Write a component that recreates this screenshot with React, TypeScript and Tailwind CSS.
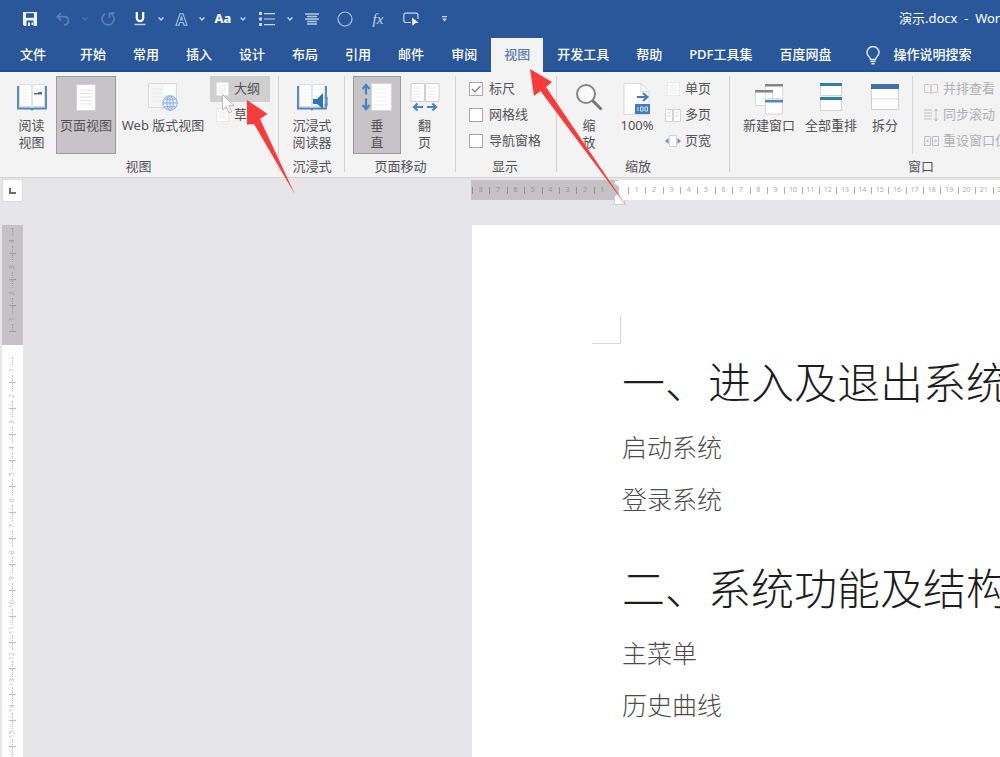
import { useState } from 'react';
import type { ReactNode } from 'react';
import clsx from 'clsx';

const tabs = ['开始', '常用', '插入', '设计', '布局', '引用', '邮件', '审阅', '视图', '开发工具', '帮助', 'PDF工具集', '百度网盘'];

const chapters = [
  { title: '一、进入及退出系统', items: ['启动系统', '登录系统'] },
  { title: '二、系统功能及结构', items: ['主菜单', '历史曲线'] }
];

const marginUnits = [8, 7, 6, 5, 4, 3, 2, 1];
const pageUnits = Array.from({ length: 22 }, (_, index) => index + 1);
const marginLines = [4, 3, 2, 1];
const pageLines = Array.from({ length: 16 }, (_, index) => index + 1);

function Caret({ className, label }: { className: string; label: string }) {
  return (
    <button type="button" aria-label={label} className={clsx('flex h-7 items-center justify-center', className)}>
      <svg width="6" height="4" viewBox="0 0 6 4" fill="none" stroke="currentColor" strokeWidth="1.4">
        <path d="M.6.6 3 3 5.4.6" />
      </svg>
    </button>
  );
}

function QuickButton({ className, label, children }: { className: string; label: string; children: ReactNode }) {
  return (
    <button type="button" aria-label={label} className={clsx('flex h-7 items-center justify-center', className)}>
      {children}
    </button>
  );
}

function QuickAccess() {
  return (
    <div className="flex items-center pl-[13px] text-[#c9d8ee]">
      <QuickButton className="w-[34px]" label="保存">
        <svg width="14" height="14" viewBox="0 0 14 14">
          <path d="M0 0h14v14H1.500L0 12.500z" fill="#eef4fc" />
          <path d="M3 1.200h8v4.600H3zM3.500 8.500h7V14h-7z" fill="#2a579a" />
          <path d="M5 10.500h2V14H5zM8.500 10.500h1.500V13H8.500z" fill="#eef4fc" />
        </svg>
      </QuickButton>
      <QuickButton className="w-[32px] text-[#5b80b9]" label="撤消">
        <svg width="14" height="14" viewBox="0 0 14 14" fill="none" stroke="currentColor" strokeWidth="1.700">
          <path d="M5 1 1.200 4.700 5 8.400M1.500 4.700H8c3 0 4.500 1.800 4.500 4S11 12.700 8 13" />
        </svg>
      </QuickButton>
      <Caret className="w-[11px] text-[#4871ae]" label="撤消列表" />
      <QuickButton className="w-[36px] text-[#5b80b9]" label="重复">
        <svg width="14" height="14" viewBox="0 0 14 14" fill="none" stroke="currentColor" strokeWidth="1.700">
          <path d="M4 1.800A6 6 0 1 0 10.500 2M8.500 6V1.200h5" />
        </svg>
      </QuickButton>
      <QuickButton className="w-[28px] text-white" label="下划线">
        <svg width="12" height="14" viewBox="0 0 12 14" fill="none" stroke="currentColor">
          <path d="M2.800 0v6a3.200 3.200 0 0 0 6.400 0V0" strokeWidth="2.200" />
          <path d="M.5 12.500h11" strokeWidth="1.500" opacity=".7" />
        </svg>
      </QuickButton>
      <Caret className="w-[14px]" label="下划线样式" />
      <QuickButton className="w-[26px] text-[#a9c0e2]" label="文本效果">
        <svg width="13" height="13" viewBox="0 0 13 13" fill="none" stroke="currentColor" strokeWidth="1.100">
          <path d="M5 .8h3l4 11.400H9L8.200 9.500H4.800L4 12.200H1zM5.600 7h1.800l-.9-3z" />
        </svg>
      </QuickButton>
      <Caret className="w-[16px]" label="文本效果选项" />
      <QuickButton className="w-[26px] text-[13px] font-bold text-white" label="更改大小写">
        Aa
      </QuickButton>
      <Caret className="w-[14px]" label="大小写选项" />
      <QuickButton className="w-[34px]" label="项目符号">
        <svg width="16" height="14" viewBox="0 0 16 14" fill="currentColor">
          <path d="M0 0h3v3H0zM0 5.500h3v3H0zM0 11h3v3H0zM5 1h11v1.200H5zM5 6.400h11v1.200H5zM5 12h11v1.200H5z" />
        </svg>
      </QuickButton>
      <Caret className="w-[12px]" label="项目符号库" />
      <QuickButton className="w-[32px] text-[#b5c9e6]" label="居中">
        <svg width="14" height="12" viewBox="0 0 14 12" fill="none" stroke="currentColor" strokeWidth="1.500">
          <path d="M0 1h14M2 3.500h10M0 6h14M2 8.500h10M2 11h10" />
        </svg>
      </QuickButton>
      <QuickButton className="w-[34px] text-[#a9c0e2]" label="椭圆">
        <svg width="16" height="16" viewBox="0 0 16 16" fill="none" stroke="currentColor" strokeWidth="1.200">
          <circle cx="8" cy="8" r="7" />
        </svg>
      </QuickButton>
      <QuickButton className="w-[32px] font-['Liberation_Serif',serif] text-[15px] italic" label="公式">
        fx
      </QuickButton>
      <QuickButton className="w-[34px]" label="选择对象">
        <svg width="16" height="15" viewBox="0 0 16 15">
          <path d="M8 10.500H2.500A1.800 1.800 0 0 1 .8 8.700V3A1.800 1.800 0 0 1 2.500 1.200h10.700A1.800 1.800 0 0 1 15 3v4" fill="none" stroke="currentColor" strokeWidth="1.200" />
          <path d="m9 5.500 6.500 5.200-3.500.5L9.500 14z" fill="#fff" />
        </svg>
      </QuickButton>
      <QuickButton className="w-[32px]" label="自定义快速访问工具栏">
        <svg width="5" height="6" viewBox="0 0 5 6" fill="currentColor">
          <path d="M0 0h5v1.200H0zM0 2.500h5L2.500 5.500z" />
        </svg>
      </QuickButton>
    </div>
  );
}

function Group({ title, className, children }: { title: string; className?: string; children: ReactNode }) {
  return (
    <section
      aria-label={title}
      className={clsx('relative flex shrink-0 flex-col pt-1 after:absolute after:top-1 after:right-0 after:h-[96px] after:w-px after:bg-[#d2d2d3]', className)}
    >
      <div className="flex h-[78px] items-start">{children}</div>
      <h2 className="mt-[3px] text-center leading-[18px]">{title}</h2>
    </section>
  );
}

function BigButton({ icon, lines, className, pressed }: { icon: ReactNode; lines: string[]; className: string; pressed?: boolean }) {
  return (
    <button
      type="button"
      aria-pressed={pressed}
      className={clsx(
        'flex h-[78px] shrink-0 flex-col items-center border pt-1.5 leading-[17px] whitespace-nowrap',
        pressed ? 'border-[#9d9b9e] bg-[#c6c4c6]' : 'border-transparent',
        className
      )}
    >
      <span className="mb-1.5 flex h-7 items-center justify-center">{icon}</span>
      {lines.map((line) => (
        <span key={line}>{line}</span>
      ))}
    </button>
  );
}

function SmallButton({ icon, label, className }: { icon: ReactNode; label: string; className?: string }) {
  return (
    <button type="button" className={clsx('flex h-[26px] items-center gap-1 whitespace-nowrap', className)}>
      <span className="flex w-4 shrink-0 justify-center">{icon}</span>
      {label}
    </button>
  );
}

function CheckRow({ label, defaultChecked }: { label: string; defaultChecked?: boolean }) {
  return (
    <label className="relative flex h-[26px] items-center gap-1.5 whitespace-nowrap">
      <input type="checkbox" defaultChecked={defaultChecked} className="peer size-3.5 appearance-none border border-[#aaa8aa] bg-white" />
      <svg className="absolute left-0 hidden size-3.5 peer-checked:block" viewBox="0 0 14 14" fill="none" stroke="#777" strokeWidth="1.200">
        <path d="m3 7 3 3 5.500-6" />
      </svg>
      {label}
    </label>
  );
}

function BookIcon({ sound }: { sound?: boolean }) {
  return (
    <svg width="32" height="28" viewBox="0 0 32 28">
      <path d="M2 3v22.500h13l1 1 1-1h13V3" fill="none" stroke="#4a83bf" strokeWidth="1.800" />
      <path d="M3.500 1.500H13l3 1 3-1h9.500v22H18l-2 1-2-1H3.500z" fill="#fff" stroke="#cbd5e2" strokeWidth=".8" />
      <path d="M16 3v21.500" stroke="#bccbdd" />
      <path d="M6 7h7M6 10h7M6 13h7M6 16h7M6 19h7M19 7h7M19 13h7M19 16h7" stroke="#ececef" strokeWidth=".8" />
      {sound ? (
        <>
          <path d="M17 16h4l6-6v16l-6-5h-4z" fill="#2f74b5" />
          <path d="M28.500 14c1.800 2.500 1.800 6 0 8.500M30 12c2.500 4 2.500 9 0 13" fill="none" stroke="#6d9bd0" />
        </>
      ) : (
        <path d="M18 10h4V9h4v2.500h-8z" fill="#4a6f9e" />
      )}
    </svg>
  );
}

function PageIcon({ small }: { small?: boolean }) {
  return (
    <svg width={small ? 13 : 20} height={small ? 14 : 27} viewBox="0 0 20 27" preserveAspectRatio="none">
      <path d="M.5.500h19v26H.5z" fill="#fff" stroke="#d3d2d5" />
      <path d="M4 6h12M4 9.500h12M4 13h12M4 16.500h12M4 20h12" stroke="#e3e2e5" />
    </svg>
  );
}

function WebIcon() {
  return (
    <svg width="30" height="28" viewBox="0 0 30 28">
      <path d="M.5.500h28v24H.5z" fill="#f6f6f7" stroke="#dadade" />
      <path d="M16 2.500h11v9H16z" fill="#fff" />
      <path d="M4 6h10M4 10h10M4 14h10M4 18h9M16 14h10" stroke="#e6e6e9" />
      <g fill="#e8f0fa" stroke="#8aabdb">
        <circle cx="22" cy="20" r="7.200" />
        <ellipse cx="22" cy="20" rx="3.200" ry="7.200" />
        <path d="M22 13v14M15 20h14M16.500 16.200h11M16.500 23.800h11" />
      </g>
    </svg>
  );
}

function VerticalIcon() {
  return (
    <svg width="30" height="28" viewBox="0 0 30 28">
      <path d="M9.500.5h20v27h-20z" fill="#fff" stroke="#d5d4d8" />
      <path d="M13 6h13M13 10h13M13 14h13M13 18h13M13 22h13" stroke="#f0f0f2" />
      <path d="M4 2.500v9M.5 6 4 2l3.500 4M4 15.500v10M.5 22 4 26l3.500-4" fill="none" stroke="#4a83c4" strokeWidth="2.200" />
    </svg>
  );
}

function FlipIcon() {
  return (
    <svg width="30" height="28" viewBox="0 0 30 28">
      <path d="M1 .5h13.500v18H1zM15.500.5H29v18H15.500z" fill="#fff" stroke="#cfced2" />
      <path d="M3.500 5h8M3.500 8h8M3.500 11h8M3.500 14h8M18 5h8M18 8h8M18 11h8M18 14h8" stroke="#ebebee" />
      <path d="M4 24h9M7.500 20.500 4 24l3.500 3.500M17 24h9M22.500 20.500 26 24l-3.500 3.500" fill="none" stroke="#4a83c4" strokeWidth="2.200" />
    </svg>
  );
}

function ZoomIcon() {
  return (
    <svg width="28" height="28" viewBox="0 0 28 28" fill="none">
      <circle cx="11" cy="11" r="9" fill="#fafafa" stroke="#858487" strokeWidth="2" />
      <path d="m17.500 17.500 9 9" stroke="#77767a" strokeWidth="3" />
    </svg>
  );
}

function HundredIcon() {
  return (
    <svg width="28" height="32" viewBox="0 0 28 32" className="-mb-1">
      <path d="M1 .5h17l8 8v23H1z" fill="#fff" stroke="#dad9dd" />
      <path d="M18 .5v8h8" fill="none" stroke="#dad9dd" />
      <path d="M14 14h10M20 10l4.500 4-4.500 4" fill="none" stroke="#3f7dbd" strokeWidth="2" />
      <path d="M12 21h15v10H12z" fill="#3f7dbd" />
      <path d="M15 24v4M17.500 24h2.500v4h-2.500zM22 24h2.500v4H22z" fill="none" stroke="#d4e3f3" />
    </svg>
  );
}

function NewWindowIcon() {
  return (
    <svg width="28" height="32" viewBox="0 0 28 32" className="-mb-1">
      <path d="M10.500 1.500h17v14h-17zM.5 8.500h17v14H.5z" fill="#fff" stroke="#dad9dc" />
      <path d="M10 1h18v2.500H10zM0 7h18v2.500H0z" fill="#858487" />
      <path d="M10.500 17h17v14h-17z" fill="#fff" stroke="#d5d4d8" />
      <path d="M10 17h18v2.500H10z" fill="#5288bf" />
    </svg>
  );
}

function ArrangeIcon() {
  return (
    <svg width="22" height="28" viewBox="0 0 22 28">
      <path d="M.5.500h21v12H.5zM.5 14.500h21v13H.5z" fill="#fff" stroke="#d2d1d5" />
      <path d="M0 0h22v3H0zM0 14h22v3H0z" fill="#2c7db0" />
    </svg>
  );
}

function SplitIcon() {
  return (
    <svg width="28" height="26" viewBox="0 0 28 26">
      <path d="M.5.500h27v25H.5z" fill="#fff" stroke="#cfced2" />
      <path d="M0 0h28v5H0z" fill="#3f72ad" />
      <path d="M1 15h26" stroke="#dcdbe0" />
    </svg>
  );
}

function Ribbon() {
  return (
    <div className="flex h-[106px] shrink-0 overflow-hidden border-b border-[#d3d3d5] bg-[#f3f3f4] text-[13px] text-[#545356]">
      <Group title="视图" className="pr-[9px] pl-[7px]">
        <BigButton className="w-[49px]" icon={<BookIcon />} lines={['阅读', '视图']} />
        <BigButton className="w-[60px]" pressed icon={<PageIcon />} lines={['页面视图']} />
        <BigButton className="w-[94px]" icon={<WebIcon />} lines={['Web 版式视图']} />
        <div className="w-[60px]">
          <SmallButton className="w-full bg-[#d0cfd0] pl-1" icon={<PageIcon small />} label="大纲" />
          <SmallButton className="w-full pl-1" icon={<PageIcon small />} label="草稿" />
        </div>
      </Group>
      <Group title="沉浸式">
        <BigButton className="w-[66px]" icon={<BookIcon sound />} lines={['沉浸式', '阅读器']} />
      </Group>
      <Group title="页面移动" className="px-2">
        <BigButton className="w-[48px]" pressed icon={<VerticalIcon />} lines={['垂', '直']} />
        <BigButton className="w-[47px]" icon={<FlipIcon />} lines={['翻', '页']} />
      </Group>
      <Group title="显示" className="pr-4 pl-[13px]">
        <div>
          <CheckRow label="标尺" defaultChecked />
          <CheckRow label="网格线" />
          <CheckRow label="导航窗格" />
        </div>
      </Group>
      <Group title="缩放" className="pr-[19px] pl-2">
        <BigButton className="w-[48px]" icon={<ZoomIcon />} lines={['缩', '放']} />
        <BigButton className="w-[48px]" icon={<HundredIcon />} lines={['100%']} />
        <div className="pl-1">
          <SmallButton icon={<PageIcon small />} label="单页" />
          <SmallButton
            icon={
              <svg width="16" height="13" viewBox="0 0 16 13" fill="#fff" stroke="#d3d2d5">
                <path d="M.5.500h7v12h-7zM8.500.500h7v12h-7zM2.500 4h3M2.500 7h3M10.500 4h3M10.500 7h3" />
              </svg>
            }
            label="多页"
          />
          <SmallButton
            icon={
              <svg width="16" height="12" viewBox="0 0 16 12">
                <path d="M4.500.500h7v11h-7z" fill="#fff" stroke="#d3d2d5" />
                <path d="M3.500 3 0 6l3.500 3zM12.500 3 16 6l-3.500 3z" fill="#7f88c4" />
              </svg>
            }
            label="页宽"
          />
        </div>
      </Group>
      <Group title="窗口" className="pl-2">
        <BigButton className="w-[62px]" icon={<NewWindowIcon />} lines={['新建窗口']} />
        <BigButton className="w-[62px]" icon={<ArrangeIcon />} lines={['全部重排']} />
        <BigButton className="w-[46px]" icon={<SplitIcon />} lines={['拆分']} />
        <div className="ml-1 w-[192px] border-l border-[#d8d8da] pl-2.5 text-[#b1b0b3]">
          <SmallButton
            icon={
              <svg width="14" height="12" viewBox="0 0 14 12" fill="none" stroke="#d3c4cb">
                <path d="M.5 1.500h5l1.500 1v8l-1.500-1h-5zM13.500 1.500h-5L7 2.500v8l1.500-1h5z" />
              </svg>
            }
            label="并排查看"
          />
          <SmallButton
            icon={
              <svg width="16" height="14" viewBox="0 0 16 14" fill="none" stroke="#bdbcc0">
                <path d="M1 2h8M1 5h8M1 8h8M1 11h8M13 1v12M11 3.500 13 1l2 2.500M11 10.500 13 13l2-2.500" />
              </svg>
            }
            label="同步滚动"
          />
          <SmallButton
            icon={
              <svg width="15" height="10" viewBox="0 0 15 10" fill="none" stroke="#bdbcc0">
                <path d="M.5.500h6v9h-6zM8.500.500h6v9h-6zM2 5h3M10 5h3M4 3.500 2.500 5 4 6.500M11 3.500 12.500 5 11 6.500" />
              </svg>
            }
            label="重设窗口位置"
          />
        </div>
      </Group>
    </div>
  );
}

function RulerCells({ units }: { units: number[] }) {
  return (
    <>
      {units.map((unit) => (
        <span key={unit} className="relative flex flex-1 items-center justify-center">
          <i className="absolute left-0 h-[7px] w-px bg-current" />
          {unit}
        </span>
      ))}
    </>
  );
}

function LineCells({ lines }: { lines: number[] }) {
  return (
    <>
      {lines.map((line) => (
        <span key={line} className="relative flex h-[26px] shrink-0 items-center justify-center">
          <i className="absolute top-0 h-2 border-l border-dotted border-current" />
          <b className="-rotate-90 font-normal">{line}</b>
          <i className="absolute bottom-0 h-2 border-l border-dotted border-current" />
          <i className="absolute bottom-0 h-px w-[7px] bg-current" />
        </span>
      ))}
    </>
  );
}

function Arrows() {
  return (
    <svg className="pointer-events-none absolute top-0 left-0" width="640" height="220" viewBox="0 0 640 220">
      <path d="M222.500 94.500v15.500l3.700-3.400 2.900 6.200 2.600-1.200-2.800-6h5z" fill="#fff" stroke="#a8a7aa" strokeWidth=".8" />
      <path d="m247 100 20.500 14-7.500 5 35 75.500L254 124l-7 .5z" fill="#fb3a3c" />
      <path d="m530 69 22 13-6 5 81.500 120.500L540.500 91l-6.500 5z" fill="#fb3a3c" />
    </svg>
  );
}

export default function App() {
  const [activeTab, setActiveTab] = useState('视图');

  return (
    <div className="relative flex h-screen flex-col overflow-hidden bg-[#e6e6e8] font-['Noto_Sans','Noto_Sans_CJK_SC',sans-serif]">
      <header className="shrink-0 bg-[#2a579a] text-white">
        <div className="flex h-[38px] items-center justify-between overflow-hidden">
          <QuickAccess />
          <h1 className="w-[101px] shrink-0 text-[13px] whitespace-pre">演示.docx  -  Word</h1>
        </div>
        <nav className="flex h-[34px] items-stretch gap-px overflow-hidden pl-[7px] text-[13px] font-medium whitespace-nowrap shadow-[inset_0_-2px_0_#174f98]">
          <button type="button" className="mr-[7px] px-[13px]">文件</button>
          {tabs.map((tab) => (
            <button
              key={tab}
              type="button"
              onClick={() => setActiveTab(tab)}
              className={clsx('px-[13px]', tab === activeTab && 'bg-[#f3f3f4] text-[#5d7cae]')}
            >
              {tab}
            </button>
          ))}
          <button type="button" className="ml-5 flex items-center gap-3.5">
            <svg width="14" height="19" viewBox="0 0 14 19" fill="none" stroke="#dce8f8" strokeWidth="1.500">
              <path d="M4.500 13.500c0-2.500-3.500-3.500-3.500-7a6 6 0 0 1 12 0c0 3.500-3.500 4.500-3.500 7zM4.500 15.500h5M5.500 17.800h3" />
            </svg>
            操作说明搜索
          </button>
        </nav>
      </header>

      <Ribbon />

      <div className="flex min-h-0 flex-1">
        <aside className="flex w-6 shrink-0 flex-col pt-px pr-px pl-0.5">
          <button type="button" aria-label="制表符" className="flex h-[23px] items-center justify-center border border-[#dcdcde] bg-white">
            <svg width="7" height="6" viewBox="0 0 7 6" fill="none" stroke="#6b6a6d" strokeWidth="2">
              <path d="M1 0v5h6" />
            </svg>
          </button>
          <div className="mt-[23px] flex h-[120px] shrink-0 flex-col bg-[#c4c2c5] pt-[3px] text-[7px] text-[#9b9a9d]">
            <LineCells lines={marginLines} />
          </div>
          <div className="flex flex-1 flex-col overflow-hidden bg-white pt-3 text-[7px] text-[#bdbcbe]">
            <LineCells lines={pageLines} />
          </div>
        </aside>

        <main className="flex min-w-0 flex-1 flex-col pt-0.5 pl-[447px]">
          <div className="flex h-5 shrink-0 overflow-hidden text-[7px]">
            <div className="flex w-[148px] shrink-0 bg-[#c4c2c5] pr-2 pl-px text-[#939295]">
              <RulerCells units={marginUnits} />
            </div>
            <div className="relative min-w-0 flex-1 bg-white pl-[9px] text-[#acabae]">
              <div className="flex h-full w-[382px]">
                <RulerCells units={pageUnits} />
              </div>
            </div>
          </div>
          <svg className="-mt-5 ml-[143px] shrink-0" width="11" height="25" viewBox="0 0 11 25" fill="#fff" stroke="#c9c8cb" strokeWidth=".8">
            <path d="M.5.500h10v3l-5 4-5-4zM.5 16.500l5-4 5 4v8H.5z" />
          </svg>

          <article className="mt-5 ml-px flex-1 overflow-hidden bg-white pl-[150px] text-[#4c4b4d]">
            <div className="mt-[90px] -ml-[30px] size-[29px] border-r border-b border-[#d6d5d8]" />
            {chapters.map((chapter) => (
              <section key={chapter.title} className="mb-[25px] whitespace-nowrap">
                <h2 className="text-[43px] leading-[77px] font-light text-[#1d1c1e]">{chapter.title}</h2>
                {chapter.items.map((item) => (
                  <p key={item} className="text-[25px] leading-[52px] font-light">{item}</p>
                ))}
              </section>
            ))}
          </article>
        </main>
      </div>
      <Arrows />
    </div>
  );
}
